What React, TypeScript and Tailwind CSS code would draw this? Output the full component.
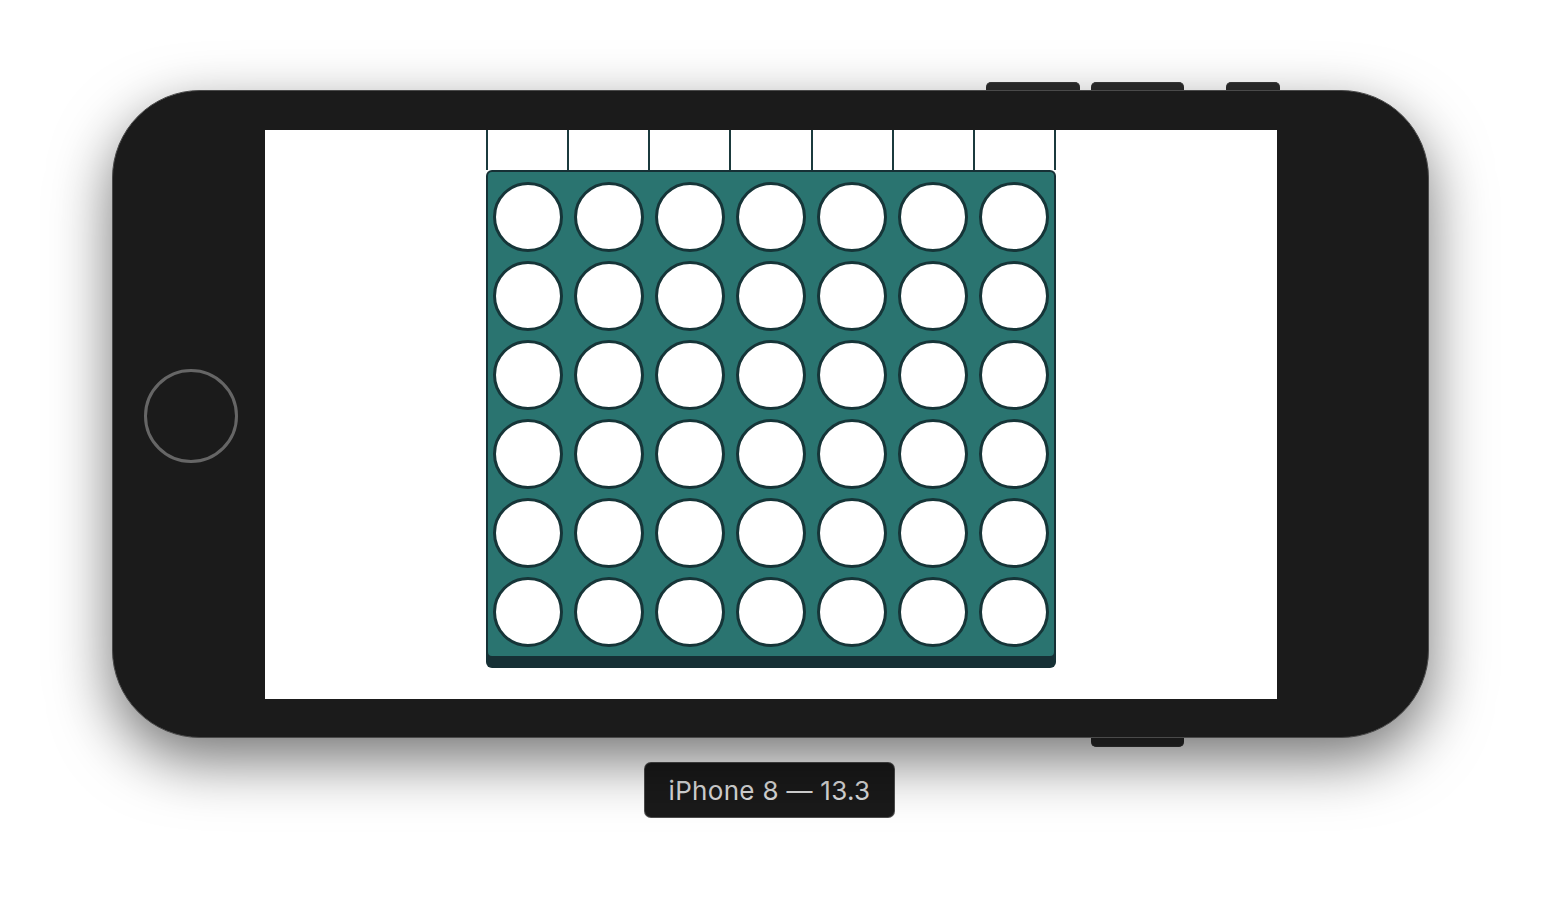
import React from "react";

const COLS = 7;
const ROWS = 6;

const Board = () => (
  <div className="w-[570px] flex flex-col">
    {/* drop guides above the board */}
    <div className="grid grid-cols-7 h-[40px] border-r-2 border-[#1b3a3d]">
      {Array.from({ length: COLS }).map((_, i) => (
        <div key={i} className="border-l-2 border-[#1b3a3d]" />
      ))}
    </div>
    <div className="bg-[#163035] rounded-[6px] p-[2px] pb-[12px]">
      <div className="bg-[#2a7470] rounded-[4px] pt-[6px] pb-[4px] grid grid-cols-7">
        {Array.from({ length: COLS * ROWS }).map((_, i) => (
          <div key={i} className="h-[79px] flex items-center justify-center">
            <div className="w-[70px] h-[70px] rounded-full bg-white border-[3px] border-[#163538]" />
          </div>
        ))}
      </div>
    </div>
  </div>
);

export default function App() {
  return (
    <div className="w-[1542px] h-[902px] bg-white flex flex-col items-start pl-[112px] pt-[90px] overflow-hidden">
      <div className="relative">
        {/* side buttons */}
        <div className="absolute top-[-8px] right-[349px] w-[94px] h-[10px] rounded-t-[5px] bg-[#2c2c2c] border-t border-[#3a3a3a]" />
        <div className="absolute top-[-8px] right-[245px] w-[93px] h-[10px] rounded-t-[5px] bg-[#2c2c2c] border-t border-[#3a3a3a]" />
        <div className="absolute top-[-8px] right-[149px] w-[54px] h-[10px] rounded-t-[5px] bg-[#2c2c2c] border-t border-[#3a3a3a]" />
        <div className="absolute bottom-[-9px] right-[245px] w-[93px] h-[10px] rounded-b-[5px] bg-[#2c2c2c] border-b border-[#3a3a3a]" />

        <div className="relative w-[1317px] h-[648px] rounded-[88px] bg-[#1b1b1b] border border-[#4a4a4a] shadow-[0_22px_60px_rgba(0,0,0,0.55)] flex items-center pl-[152px]">
          {/* home button */}
          <div className="absolute left-[31px] top-[278px] w-[94px] h-[94px] rounded-full border-[3px] border-[#666666]" />
          <div className="w-[1012px] h-[569px] bg-white flex flex-col items-center">
            <Board />
          </div>
        </div>
      </div>

      <div className="mt-[24px] ml-[532px] w-[251px] h-[56px] rounded-[7px] bg-[#1a1a1a] border border-[#9a9a9a]/40 flex items-center justify-center">
        <span className="text-[26px] text-[#dadada] font-['Inter',sans-serif] tracking-[0.3px]">
          iPhone 8 — 13.3
        </span>
      </div>
    </div>
  );
}
